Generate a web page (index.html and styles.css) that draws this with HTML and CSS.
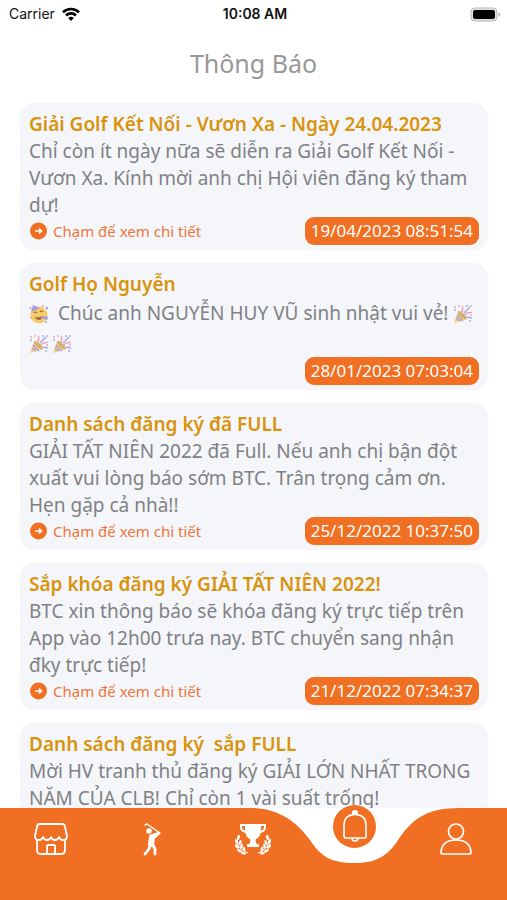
FILE: index.html
```html
<!DOCTYPE html>
<html lang="vi">
<head>
<meta charset="utf-8">
<meta name="viewport" content="width=device-width, initial-scale=1">
<title>Thông Báo</title>
<link rel="stylesheet" href="styles.css">
</head>
<body>
<svg class="defs" aria-hidden="true">
  <symbol id="go" viewBox="0 0 18 18">
    <circle cx="9" cy="9" r="8.500" fill="#f06f22"/>
    <path d="M5.500 9h6M9.500 6.500 12 9l-2.500 2.500" fill="none" stroke="#fff" stroke-width="1.600"/>
  </symbol>
  <symbol id="popper" viewBox="0 0 20 20">
    <path d="M1 19 5 7l9 8z" fill="#f3cf86"/>
    <path d="m4 11 6 6M3 14l4 3M6 8l7 7" stroke="#a99be0" stroke-width="1.300"/>
    <path d="M5 7c2-1 10 5 9 8-3 1-9-4-9-8z" fill="#d8ad6c"/>
    <path d="M8 8c4-2 0-4 2-6M12 11c2-4 4-1 7-3" fill="none" stroke="#ef9fb4" stroke-width="1.400"/>
    <path d="m11 9 6-6M14 13l5 1" stroke="#9eabed" stroke-width="1.500"/>
    <g fill="#efa6b8"><circle cx="2" cy="3" r="1"/><circle cx="6" cy="2" r="1"/><circle cx="18" cy="2" r="1"/><circle cx="18" cy="11" r="1"/></g>
    <g fill="#a2b0ee"><circle cx="2" cy="6" r="1"/><circle cx="14" cy="2" r="1"/><circle cx="17" cy="17" r="1"/></g>
  </symbol>
  <symbol id="leaves" viewBox="0 0 14 20">
    <path d="M3 1C1 7 3 15 13 18" fill="none" stroke="#fff"/>
    <g fill="#fff">
      <ellipse cx="3.500" cy="2.500" rx="1.400" ry="2.600" transform="rotate(15 3.500 2.500)"/>
      <ellipse cx="1.300" cy="6.500" rx="1.300" ry="2.600" transform="rotate(-25 1.300 6.500)"/>
      <ellipse cx="5" cy="7.500" rx="1.300" ry="2.600" transform="rotate(30 5 7.500)"/>
      <ellipse cx="2" cy="11.500" rx="1.400" ry="2.700" transform="rotate(-45 2 11.500)"/>
      <ellipse cx="6.500" cy="11" rx="1.300" ry="2.600" transform="rotate(10 6.500 11)"/>
      <ellipse cx="4.500" cy="15.700" rx="1.300" ry="2.700" transform="rotate(-65 4.500 15.700)"/>
      <ellipse cx="9" cy="14" rx="1.300" ry="2.500" transform="rotate(-20 9 14)"/>
      <ellipse cx="8.500" cy="18.300" rx="1.200" ry="2.500" transform="rotate(-80 8.500 18.300)"/>
    </g>
  </symbol>
</svg>
<div class="app">
  <header>
    <div class="status">
      <span class="carrier">Carrier
        <svg class="wifi" viewBox="0 0 18 14" aria-hidden="true"><g fill="none" stroke="#000" stroke-width="2.600"><path d="M1 5.200a11.500 11.500 0 0 1 16 0M4 8.500a7 7 0 0 1 10 0"/></g><path d="M6.200 11a4 4 0 0 1 5.600 0L9 14z"/></svg>
      </span>
      <time class="clock">10:08 AM</time>
      <svg class="battery" viewBox="0 0 31 15" role="img" aria-label="Pin"><rect x="1" y="1" width="26" height="13" rx="4" fill="#e4e4e4" stroke="#b5b5b5"/><rect x="3" y="3" width="22" height="9" rx="2"/><path d="M28.500 5.500v4q2-.5 2-2t-2-2z" fill="#b5b5b5"/></svg>
    </div>
    <h1>Thông Báo</h1>
  </header>
  <main class="list">
    <article class="card">
      <h2>Giải Golf Kết Nối - Vươn Xa - Ngày 24.04.2023</h2>
      <p>Chỉ còn ít ngày nữa sẽ diễn ra Giải Golf Kết Nối -<br>Vươn Xa. Kính mời anh chị Hội viên đăng ký tham<br>dự!</p>
      <footer><a href="#"><svg aria-hidden="true"><use href="#go"/></svg>Chạm để xem chi tiết</a><time>19/04/2023 08:51:54</time></footer>
    </article>
    <article class="card">
      <h2>Golf Họ Nguyễn</h2>
      <p class="festive"><svg class="emoji face" viewBox="0 0 20 20" role="img" aria-label="Mặt cười"><circle cx="10" cy="11" r="8.500" fill="#f5cc6a"/><path d="M2 8 4 1l7 3z" fill="#a99be0"/><path d="M5 9q1.500-2 3 0M11 8q1.500-2 3 0" fill="none" stroke="#8b6340" stroke-width="1.200"/><path d="M6 13q4 1 7-1 0 4-3 4t-4-3z" fill="#a8663e"/><path d="m12 13 5 1" stroke="#9b8ddf" stroke-width="2"/><circle cx="17" cy="14" r="2" fill="#b9a4d8"/><g fill="#a99be0"><circle cx="1.500" cy="4" r="1"/><circle cx="18" cy="4" r="1.300"/><circle cx="17" cy="18" r="1"/></g><g fill="#ef9fb4"><circle cx="14" cy="2" r="1"/><circle cx="2" cy="14" r="1"/></g></svg>Chúc anh NGUYỄN HUY VŨ sinh nhật vui vẻ! <svg class="emoji" role="img" aria-label="Pháo giấy"><use href="#popper"/></svg><br><svg class="emoji" role="img" aria-label="Pháo giấy"><use href="#popper"/></svg><svg class="emoji" role="img" aria-label="Pháo giấy"><use href="#popper"/></svg></p>
      <footer><time>28/01/2023 07:03:04</time></footer>
    </article>
    <article class="card">
      <h2>Danh sách đăng ký đã FULL</h2>
      <p>GIẢI TẤT NIÊN 2022 đã Full. Nếu anh chị bận đột<br>xuất vui lòng báo sớm BTC. Trân trọng cảm ơn.<br>Hẹn gặp cả nhà!!</p>
      <footer><a href="#"><svg aria-hidden="true"><use href="#go"/></svg>Chạm để xem chi tiết</a><time>25/12/2022 10:37:50</time></footer>
    </article>
    <article class="card">
      <h2>Sắp khóa đăng ký GIẢI TẤT NIÊN 2022!</h2>
      <p>BTC xin thông báo sẽ khóa đăng ký trực tiếp trên<br>App vào 12h00 trưa nay. BTC chuyển sang nhận<br>đky trực tiếp!</p>
      <footer><a href="#"><svg aria-hidden="true"><use href="#go"/></svg>Chạm để xem chi tiết</a><time>21/12/2022 07:34:37</time></footer>
    </article>
    <article class="card">
      <h2>Danh sách đăng ký&nbsp; sắp FULL</h2>
      <p>Mời HV tranh thủ đăng ký GIẢI LỚN NHẤT TRONG<br>NĂM CỦA CLB! Chỉ còn 1 vài suất trống!</p>
    </article>
  </main>
  <nav class="tabs">
    <button type="button" aria-label="Trang chủ"><svg viewBox="0 0 36 36"><g fill="none" stroke="#fff" stroke-width="1.800" stroke-linejoin="round" stroke-linecap="round"><path d="M7 3h22q3 0 3 3l2 9q0 4-4 4-3 0-4-3-1 3-4 3t-4-3q-1 3-4 3t-4-3q-1 3-4 3-4 0-4-4l2-9q0-3 3-3z"/><path d="M4 19v10q0 4 4 4h20q4 0 4-4V19M14 33v-8q0-1 1-1h6q1 0 1 1v8"/></g></svg></button>
    <button type="button" aria-label="Sân golf"><svg viewBox="0 0 36 36"><circle cx="15" cy="10" r="2.800" fill="#fff"/><g fill="none" stroke="#fff" stroke-linecap="round" stroke-linejoin="round"><path d="m11 4 2-1 13 9" stroke-width="1.400"/><path d="m17 15 8-3-4 4" stroke-width="2.500"/><path d="m18 16-1 7" stroke-width="6"/><path d="m16 24-1 4-4 5M19 24l2 4v5" stroke-width="2.800"/></g></svg></button>
    <button type="button" aria-label="Giải đấu"><svg class="trophy" viewBox="0 0 38 36"><path d="M11 3h16v5q0 8-5 10-1 3 1 5h2v3H13v-3h2q2-2 1-5-5-2-5-10z" fill="#fff"/><path d="M12 4H7v2q0 5 7 5M26 4h5v2q0 5-7 5" fill="none" stroke="#fff" stroke-width="2"/><use href="#leaves" x="1" y="14" width="14" height="20"/><use href="#leaves" width="14" height="20" transform="translate(37 14) scale(-1 1)"/></svg></button>
    <div class="active">
      <svg class="notch" viewBox="0 0 210 56" aria-hidden="true"><path d="M0 0C30 0 47 15 60 32 71 49 82 55 104 55s34-7 44-23C161 13 174 0 210 0z" fill="#fff"/></svg>
      <button type="button" class="bell" aria-label="Thông báo" aria-current="page"><svg viewBox="0 0 36 36"><path d="M15 6V3q0-2 3-2t3 2v3z" fill="#fff"/><path d="M7 27.500v-11q0-11 11-11t11 11v11q0 1.500-1.500 1.500h-19q-1.500 0-1.500-1.500zM15 29q0 3 3 3t3-3" fill="none" stroke="#fff" stroke-width="1.600"/></svg></button>
    </div>
    <button type="button" aria-label="Tài khoản"><svg viewBox="0 0 36 36"><g fill="none" stroke="#fff" stroke-width="1.700"><circle cx="18" cy="10.500" r="7.500"/><path d="M3 31q1-12 15-12t15 12q0 2-2 2H5q-2 0-2-2z"/></g></svg></button>
  </nav>
</div>
</body>
</html>
```
FILE: styles.css
```css
* { box-sizing: border-box; }

body {
  margin: 0;
  background: #fff;
  color: #808184;
  font-family: "Noto Sans", sans-serif;
}

h1, h2, p { margin: 0; }

button {
  border: 0;
  padding: 0;
  background: none;
  cursor: pointer;
}

.defs {
  position: absolute;
  width: 0;
  height: 0;
}

.app {
  display: flex;
  flex-direction: column;
  height: 100vh;
}

.status {
  display: grid;
  grid-template-columns: 1fr auto 1fr;
  align-items: center;
  height: 28px;
  padding: 0 6px 0 9px;
  color: #111;
  font: 14px/28px Inter, sans-serif;
}

.carrier {
  display: flex;
  align-items: center;
  gap: 7px;
}

.wifi { width: 18px; height: 14px; }
.clock { font-weight: 600; }
.battery { width: 31px; height: 15px; justify-self: end; }

h1 {
  padding: 18px 0 23px;
  color: #989898;
  font-size: 25px;
  font-weight: 400;
  line-height: 34px;
  text-align: center;
}

.list {
  flex: 1;
  min-height: 0;
  overflow: hidden;
  display: flex;
  flex-direction: column;
  gap: 13px;
  padding: 0 19px 0 20px;
}

.card {
  flex: none;
  padding: 8px 9px 5px;
  border-radius: 14px;
  background: #f4f6fa;
}

.card h2 {
  color: #d9930d;
  font-size: 19px;
  font-weight: 600;
  line-height: 27px;
}

.card p {
  font-size: 19px;
  line-height: 27px;
  white-space: nowrap;
}

.card .festive {
  padding-bottom: 1px;
  line-height: 30px;
}

.emoji {
  width: 20px;
  height: 20px;
  margin-right: 3px;
  vertical-align: -4px;
}

.face { margin-right: 9px; }

.card footer {
  display: flex;
  align-items: center;
  height: 28px;
  margin-top: -2px;
}

.card a {
  display: flex;
  align-items: center;
  gap: 5px;
  color: #f0743a;
  font-size: 15px;
  text-decoration: none;
}

.card a svg { width: 19px; height: 18px; }

.card time {
  margin-left: auto;
  padding: 0 6px;
  border-radius: 9px;
  background: #f06f22;
  color: #fff;
  font-size: 17px;
  line-height: 28px;
}

.tabs {
  flex: none;
  display: grid;
  grid-template-columns: repeat(5, 1fr);
  justify-items: center;
  align-items: start;
  height: 92px;
  background: #f06f22;
}

.tabs > button { margin-top: 13px; }
.tabs button svg { display: block; width: 36px; height: 36px; }
.tabs .trophy { width: 38px; }

.active {
  position: relative;
  display: flex;
  justify-content: center;
  width: 100%;
}

.notch {
  position: absolute;
  top: 0;
  left: 50%;
  width: 210px;
  height: 56px;
  margin-left: -105px;
}

.active .bell {
  position: relative;
  display: grid;
  place-items: center;
  width: 43px;
  height: 43px;
  margin-top: -3px;
  border-radius: 50%;
  background: #f06f22;
}
```
